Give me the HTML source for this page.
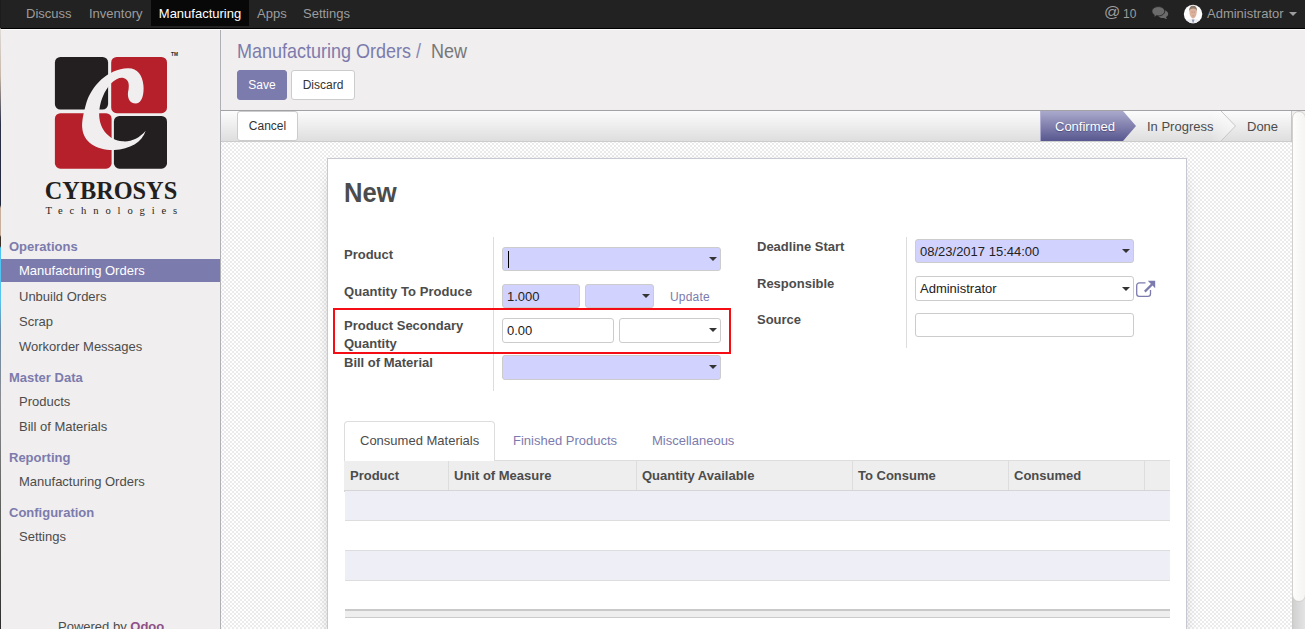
<!DOCTYPE html>
<html><head><meta charset="utf-8">
<style>
*{box-sizing:border-box;margin:0;padding:0}
html,body{width:1305px;height:629px;overflow:hidden;background:#f0eeee;font-family:"Liberation Sans",sans-serif;font-size:13px;color:#4c4c4c}
.abs{position:absolute}
#nav{z-index:5;position:absolute;left:0;top:0;width:1305px;height:30px;background:#222;border-bottom:1px solid #fbfbfb;box-shadow:inset 0 -1px 0 #000}
#nav span{position:absolute;top:0;height:26px;line-height:27px;color:#9d9d9d;white-space:nowrap}
#leftstrip{z-index:6;position:absolute;left:0;top:0;width:1px;height:629px;background:linear-gradient(#1c1c1c 0,#1c1c1c 28px,#e0dcd8 29px,#d8d2cc 40px,#c8b8a8 76px,#2a3048 124px,#20283c 205px,#c8b09c 208px,#c8b09c 235px,#3a3028 237px,#3a3028 246px,#4cc4f4 248px,#58c4ee 300px,#6a8aa6 330px,#8a8c90 400px,#5a5c58 520px,#2c2c2c 629px)}
#side{z-index:2;position:absolute;left:1px;top:0;width:220px;height:629px;background:#f0eeee;border-right:1px solid #afafb6}
.sec{position:absolute;left:8px;font-weight:bold;color:#7c7bad;white-space:nowrap;line-height:16px}
.mi{position:absolute;left:0;width:219px;height:23px;padding-left:18px;line-height:23px;white-space:nowrap;color:#4c4c4c}
.mi.act{background:#7c7bad;color:#fff}

#cp{position:absolute;left:221px;top:30px;width:1084px;height:81px;background:#f0eeee;border-bottom:1px solid #a2a2a6}
.bc{position:absolute;top:42px;font-size:18px;line-height:21px;white-space:nowrap;transform:scaleY(1.08);transform-origin:0 16.500px}
.btn{position:absolute;border:1px solid #ccc;border-radius:3px;background:#fff;color:#333;font-size:12px;line-height:18px;padding:5px 0;text-align:center;white-space:nowrap}
.btn.pri{background:#7c7bad;border-color:#7c7bad;color:#fff}
#sb{position:absolute;left:221px;top:111px;width:1070px;height:31px;background:linear-gradient(#fcfcfc,#dedede);border-bottom:1px solid #ccc}
#bg{position:absolute;left:220px;top:140px;width:1072px;height:489px;z-index:0}
#sheet{position:absolute;left:327px;top:158px;width:860px;height:600px;background:#fff;border:1px solid #c8c8d3;box-shadow:0 5px 20px -15px #000}
h1{position:absolute;left:344px;top:178px;font-size:26px;line-height:30px;font-weight:bold;color:#4c4c4c;transform:scale(.985,1.055);transform-origin:0 23.500px}
.lbl{position:absolute;font-weight:bold;color:#4c4c4c;line-height:18px;white-space:nowrap}
.inp{position:absolute;height:24px;border:1px solid #ccc;border-radius:3px;background:#fff;padding:0 4px;line-height:23px;color:#222;white-space:nowrap}
.inp.req{background:#d2d2ff}
.car{position:absolute;width:0;height:0;border-left:4px solid transparent;border-right:4px solid transparent;border-top:4px solid #333}
.vs{position:absolute;width:1px;background:#ddd}

.st{position:absolute;top:112px;height:30px;line-height:30px;white-space:nowrap;color:#4c4c4c}
.tab{position:absolute;top:432px;line-height:18px;color:#7c7bad;white-space:nowrap}
.th{position:absolute;top:461px;height:29px;line-height:29px;font-weight:bold;color:#4c4c4c;white-space:nowrap;padding-left:5px;border-left:1px solid #ddd}
.row{position:absolute;left:345px;width:825px;height:30px;border-bottom:1px solid #ddd}
</style></head><body>
<div id="nav">
<span style="left:26px">Discuss</span>
<span style="left:89px">Inventory</span>
<span style="left:151px;width:98px;background:#080808;color:#fff;text-align:center">Manufacturing</span>
<span style="left:257px">Apps</span>
<span style="left:303px">Settings</span>

<span style="left:1104px;top:-1px;font-size:15.500px;line-height:25px;transform:scaleX(1.04);transform-origin:0 0">@</span>
<span style="left:1123px;top:1px;font-size:12px;line-height:27px">10</span>
<svg style="position:absolute;left:1150px;top:0" width="54" height="28" viewBox="1150 0 54 28">
<path d="M1162.800 10c-3 0-5.400 1.800-5.400 4s2.400 4 5.400 4c.4 0 .8 0 1.200-.1.800.7 1.900 1.100 3.200 1.100-.6-.5-1.100-1.200-1.300-2 1.400-.7 2.300-1.800 2.300-3 0-2.200-2.400-4-5.400-4z" fill="#6b6b6b"/>
<path d="M1158.300 6.600c-3.500 0-6.400 2.100-6.400 4.700 0 1.500.9 2.800 2.400 3.600-.2.800-.7 1.500-1.400 2.100 1.500 0 2.800-.5 3.700-1.300.5.100 1.100.2 1.700.2 3.500 0 6.400-2.100 6.400-4.700s-2.900-4.600-6.400-4.600z" fill="#6b6b6b" stroke="#222" stroke-width=".9"/>
<defs><clipPath id="av"><circle cx="1193.050" cy="13.950" r="9.250"/></clipPath></defs>
<circle cx="1193.050" cy="13.950" r="9.250" fill="#fdfdfd"/>
<g clip-path="url(#av)">
<path d="M1184 24c.5-3 3-4.200 6-4.800l3 .3 3-.3c3 .6 5.500 1.800 6 4.800z" fill="#ececf1"/>
<path d="M1191.700 19.600l1.400 3.800 1.400-3.800z" fill="#8794ad"/>
<path d="M1189.400 11C1189.400 8 1190.500 6.300 1193.100 6.300S1196.800 8 1196.800 11C1196.800 14.500 1195.400 18.400 1193.100 18.400S1189.400 14.500 1189.400 11z" fill="#dcb29d"/>
<path d="M1189.300 11.300c-.5-3.600 1.200-5.600 3.800-5.600s4.300 2 3.800 5.600c-.4-1.900-1.300-2.700-3.800-2.700s-3.400.8-3.800 2.700z" fill="#8e7b70"/>
<path d="M1191.600 12.100h1M1193.700 12.100h1" stroke="#8a6a5a" stroke-width=".5"/>
<path d="M1192 15.900h2.200" stroke="#b98874" stroke-width=".5"/>
</g></svg>
<span style="left:1207px">Administrator</span>
<i style="position:absolute;left:1289px;top:12px;width:0;height:0;border-left:4px solid transparent;border-right:4px solid transparent;border-top:4px solid #9d9d9d"></i>
</div>
<div id="side">

<svg style="position:absolute;left:43px;top:44px" width="140" height="190" viewBox="0 0 140 190">
<rect x="10.900" y="13" width="53.200" height="52.500" rx="5.500" fill="#231f20"/>
<rect x="67.200" y="13" width="55.800" height="56.200" rx="5.500" fill="#b5202a"/>
<rect x="10.900" y="69.200" width="56.700" height="55.500" rx="5.500" fill="#b5202a"/>
<rect x="69.900" y="71.900" width="53.100" height="52.800" rx="5.500" fill="#231f20"/>
<g transform="translate(1,1) scale(0.20678)"><path d="M400,112 C305,116 222,195 197,290 C185,335 178,370 180,400 C185,470 250,510 335,508 C410,505 470,470 487,415 C455,452 415,470 375,466 C310,460 265,410 262,340 C260,280 290,215 320,185 C340,165 365,155 380,160 C405,168 408,190 404,215 C394,252 408,283 440,283 C470,283 480,235 476,195 C472,145 445,110 400,112 Z" fill="#f0eeee"/></g>
<text x="127" y="11.700" font-family="Liberation Sans, sans-serif" font-size="4.800" font-weight="bold" fill="#231f20">TM</text>
<text x="0.800" y="154.900" font-family="Liberation Serif, serif" font-size="26" font-weight="bold" fill="#231f20" textLength="132.400" lengthAdjust="spacingAndGlyphs">CYBROSYS</text>
<text x="1.400" y="169.700" font-family="Liberation Serif, serif" font-size="10.600" fill="#231f20" textLength="131.800" lengthAdjust="spacing">Technologies</text>
</svg>
<div class="abs" style="left:57px;top:618px;line-height:18px;white-space:nowrap">Powered by <b style="color:#8f5088">Odoo</b></div>
<div class="sec" style="top:239px">Operations</div>
<div class="mi act" style="top:259px">Manufacturing Orders</div>
<div class="mi" style="top:285px">Unbuild Orders</div>
<div class="mi" style="top:310px">Scrap</div>
<div class="mi" style="top:335px">Workorder Messages</div>
<div class="sec" style="top:370px">Master Data</div>
<div class="mi" style="top:390px">Products</div>
<div class="mi" style="top:415px">Bill of Materials</div>
<div class="sec" style="top:450px">Reporting</div>
<div class="mi" style="top:470px">Manufacturing Orders</div>
<div class="sec" style="top:505px">Configuration</div>
<div class="mi" style="top:525px">Settings</div>
</div>

<div id="cp"></div>
<div class="bc" style="left:237px;color:#7c7bad">Manufacturing Orders</div>
<div class="bc" style="left:416px;color:#8887b6">/</div>
<div class="bc" style="left:431px;color:#777">New</div>
<div class="btn pri" style="left:237px;top:70px;width:50px;height:30px">Save</div>
<div class="btn" style="left:291px;top:70px;width:64px;height:30px">Discard</div>
<svg id="bg" width="1072" height="489"><defs><pattern id="ck" width="4" height="4" patternUnits="userSpaceOnUse"><rect x="0" y="0" width="2" height="1" fill="#ebebeb"/><rect x="0" y="3" width="2" height="1" fill="#ebebeb"/><rect x="2" y="1" width="2" height="2" fill="#ebebeb"/></pattern></defs><rect width="1072" height="489" fill="#fff"/><rect width="1072" height="489" fill="url(#ck)"/></svg>
<div id="sb"></div>
<div class="btn" style="left:237px;top:111px;width:61px;height:30px">Cancel</div>
<div id="sheet"></div>
<h1>New</h1>

<!-- status pills -->
<svg class="abs" style="left:1030px;top:111px" width="262" height="30">
<defs><linearGradient id="pg" x1="0" y1="0" x2="0" y2="1"><stop offset="0" stop-color="#aaa9cc"/><stop offset="1" stop-color="#58578f"/></linearGradient>
<linearGradient id="lg2" x1="0" y1="0" x2="1" y2="0"><stop offset="0" stop-color="#fff" stop-opacity="0"/><stop offset="1" stop-color="#fff" stop-opacity=".55"/></linearGradient><linearGradient id="lg" x1="0" y1="0" x2="0" y2="1"><stop offset="0" stop-color="#fcfcfc"/><stop offset="1" stop-color="#dedede"/></linearGradient></defs>
<polygon points="10,0 93,0 106,15 93,30 10,30" fill="url(#pg)"/><rect x="10" y="0" width="1" height="30" fill="#b9b8d8" opacity=".8"/>

<polygon points="180,0 191,0 205.500,15 191,30 180,30" fill="url(#lg2)"/><polyline points="191,0 205.500,15 191,30" fill="none" stroke="#c6c6c6" stroke-width="1"/>
</svg>
<div class="st" style="left:1055px;color:#fff;text-shadow:0 1px 1px #4d4c7d">Confirmed</div>
<div class="st" style="left:1147px">In Progress</div>
<div class="st" style="left:1247px">Done</div>

<!-- left group -->
<div class="vs" style="left:493px;top:237px;height:154px"></div>
<div class="lbl" style="left:344px;top:246px">Product</div>
<div class="inp req" style="left:502px;top:247px;width:219px"><span style="position:absolute;left:5px;top:3px;width:1px;height:17px;background:#000"></span></div>
<div class="car" style="left:709px;top:257px"></div>
<div class="lbl" style="left:344px;top:283px;letter-spacing:.07px">Quantity To Produce</div>
<div class="inp req" style="left:502px;top:284px;width:78px">1.000</div>
<div class="inp req" style="left:585px;top:284px;width:69px"></div>
<div class="car" style="left:642px;top:294px"></div>
<div class="abs" style="left:670px;top:288px;color:#7c7bad;line-height:18px;font-size:12px;letter-spacing:.2px">Update</div>
<div class="abs" style="left:333px;top:308px;width:398px;height:46px;border:2px solid #f50d15"></div>
<div class="lbl" style="left:344px;top:317px">Product Secondary<br>Quantity</div>
<div class="inp" style="left:502px;top:318px;width:112px;height:25px;line-height:24px">0.00</div>
<div class="inp" style="left:619px;top:318px;width:102px;height:25px"></div>
<div class="car" style="left:709px;top:328px"></div>
<div class="lbl" style="left:344px;top:354px">Bill of Material</div>
<div class="inp req" style="left:502px;top:355px;width:219px;height:25px"></div>
<div class="car" style="left:709px;top:365px"></div>

<!-- right group -->
<div class="vs" style="left:906px;top:237px;height:111px"></div>
<div class="lbl" style="left:757px;top:238px">Deadline Start</div>
<div class="inp req" style="left:915px;top:239px;width:219px">08/23/2017 15:44:00</div>
<div class="car" style="left:1122px;top:249px"></div>
<div class="lbl" style="left:757px;top:275px">Responsible</div>
<div class="inp" style="left:915px;top:276px;width:219px;height:25px;line-height:24px">Administrator</div>
<div class="car" style="left:1122px;top:287px"></div>
<svg class="abs" style="left:1136px;top:280px" width="20" height="18" viewBox="0 0 20 18"><path d="M9.500 2.900H3.300a2.600 2.600 0 0 0-2.600 2.600v8.300a2.600 2.600 0 0 0 2.600 2.600h8.600a2.600 2.600 0 0 0 2.600-2.600V10" fill="none" stroke="#7c7bad" stroke-width="1.300"/><path d="M8.800 11.600L16 4.400" stroke="#7c7bad" stroke-width="2.200" fill="none"/><path d="M11.800 0.800h7.400v7.400z" fill="#7c7bad"/></svg>
<div class="lbl" style="left:757px;top:311px">Source</div>
<div class="inp" style="left:915px;top:313px;width:219px"></div>

<!-- tabs -->
<div class="abs" style="left:344px;top:460px;width:826px;height:1px;background:#ddd"></div>
<div class="abs" style="left:344px;top:421px;width:151px;height:40px;border:1px solid #ddd;border-bottom:0;border-radius:4px 4px 0 0;background:#fff"></div>
<div class="tab" style="left:360px;color:#4c4c4c">Consumed Materials</div>
<div class="tab" style="left:513px">Finished Products</div>
<div class="tab" style="left:652px">Miscellaneous</div>
<!-- table -->
<div class="abs" style="left:344px;top:461px;width:826px;height:31px;background:#eee;border-bottom:2px solid #d5d5d5"></div>
<div class="th" style="left:344px;border-left:0;padding-left:6px">Product</div>
<div class="th" style="left:448px">Unit of Measure</div>
<div class="th" style="left:636px">Quantity Available</div>
<div class="th" style="left:852px">To Consume</div>
<div class="th" style="left:1008px">Consumed</div>
<div class="th" style="left:1144px"></div>
<div class="row" style="top:491px;background:#eeeef6"></div>
<div class="row" style="top:521px"></div>
<div class="row" style="top:551px;background:#eeeef6"></div>
<div class="row" style="top:581px;border-bottom:0"></div>
<div class="abs" style="left:345px;top:609px;width:825px;height:9px;background:#eee;border-top:2px solid #c9c9c9;border-bottom:1px solid #ccc"></div>

<!-- scrollbar -->
<div class="abs" style="left:1291px;top:111px;width:1px;height:31px;background:#c6c6c6"></div>
<div class="abs" style="left:1292px;top:111px;width:13px;height:518px;background:linear-gradient(90deg,#c9c8c6,#d2d2d2 2px,#e4e4e4)"></div>
<div class="abs" style="left:1292px;top:111px;width:13px;height:8px;background:#efeeed"></div>
<div class="abs" style="left:1292px;top:111px;width:14px;height:491px;border-radius:7px;background:linear-gradient(90deg,#fdfdfd,#f5f4f3);border:1px solid #d2d0cd"></div>
<div id="leftstrip"></div>
</body></html>
